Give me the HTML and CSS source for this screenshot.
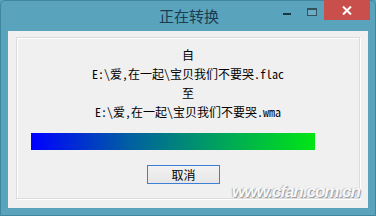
FILE: index.html
```html
<!DOCTYPE html>
<html lang="zh">
<head>
<meta charset="utf-8">
<title>正在转换</title>
<link rel="stylesheet" href="styles.css">
</head>
<body>
<div class="window">
  <div class="titlebar">
    <div class="spacer"></div>
    <div class="title">正在转换</div>
    <div class="controls">
      <div class="btn-min"><span class="dash"></span></div>
      <div class="btn-max"><span class="box"></span></div>
      <div class="btn-close">
        <svg width="10" height="9" viewBox="0 0 10 9"><path d="M1 0.5 L9 8.5 M9 0.5 L1 8.5" stroke="#fff" stroke-width="2"/></svg>
      </div>
    </div>
  </div>
  <div class="client">
    <div class="group">
      <div class="lines">
        <div class="line">自</div>
        <div class="line">E:\爱,在一起\宝贝我们不要哭.flac</div>
        <div class="line">至</div>
        <div class="line">E:\爱,在一起\宝贝我们不要哭.wma</div>
      </div>
      <div class="progress"></div>
      <div class="actions"><button class="cancel">取消</button></div>
    </div>
    <div class="watermark">www.cfan.com.cn</div>
  </div>
</div>
</body>
</html>
```
FILE: styles.css
```css
html, body {
  margin: 0;
  padding: 0;
  background: #5aa2bc;
}
.window {
  box-sizing: border-box;
  width: 376px;
  height: 216px;
  background: #5aa3bd;
  border: 1px solid #3f879f;
  border-radius: 5px 5px 0 0;
  display: flex;
  flex-direction: column;
}
.titlebar {
  height: 30px;
  display: grid;
  grid-template-columns: 1fr auto 1fr;
  align-items: start;
}
.title {
  font-family: "Noto Sans CJK SC", sans-serif;
  font-size: 15px;
  line-height: 30px;
  color: #1b3c4e;
  padding-left: 2px;
}
.controls {
  display: flex;
  justify-content: flex-end;
  padding-right: 5px;
}
.btn-min {
  width: 26px;
  height: 20px;
  display: flex;
  justify-content: center;
}
.dash {
  width: 8px;
  height: 2px;
  background: #1b3646;
  margin-top: 12px;
}
.btn-max {
  width: 24px;
  height: 20px;
  display: flex;
  justify-content: center;
}
.box {
  box-sizing: border-box;
  width: 10px;
  height: 8px;
  margin-top: 7px;
  border: 1px solid #33525e;
  border-top-width: 2px;
  background: #6aaec5;
}
.btn-close {
  width: 46px;
  height: 20px;
  margin-top: -1px;
  background: #c84f4b;
  display: flex;
  align-items: center;
  justify-content: center;
}
.client {
  position: relative;
  overflow: hidden;
  margin: 0 7px;
  height: 177px;
  background: #f0f0f0;
  padding: 6px 8px 9px;
  box-sizing: border-box;
}
.group {
  box-sizing: border-box;
  height: 162px;
  border: 1px solid #dcdcdc;
  box-shadow: inset 1px 1px 0 #ffffff, 1px 1px 0 #ffffff;
  padding-top: 7px;
}
.lines {
  text-align: center;
  font-family: "Noto Sans Mono CJK SC", "Noto Sans CJK SC", monospace;
  font-size: 12px;
  line-height: 19px;
  color: #000;
}
.progress {
  margin: 12px 0 0 14px;
  width: 284px;
  height: 17px;
  background: linear-gradient(to right, #0000ff 0%, #0060a0 35%, #00a060 65%, #00e614 100%);
}
.actions {
  margin-top: 15px;
  padding-left: 130px;
}
.cancel {
  box-sizing: border-box;
  width: 73px;
  height: 19px;
  padding: 0;
  border: 1px solid #3c7fd6;
  background: linear-gradient(#f2f2f2, #e6e6e6);
  font-family: "Noto Sans CJK SC", sans-serif;
  font-size: 12px;
  line-height: 17px;
  color: #000;
}
.watermark {
  position: absolute;
  left: 224px;
  top: 151px;
  white-space: nowrap;
  font-family: "Liberation Sans", sans-serif;
  font-weight: bold;
  font-style: italic;
  font-size: 17px;
  letter-spacing: -1px;
  color: #f8f8f8;
  text-shadow: 1px 1px 0 #a0a0a0, -1px 0 1px #b8b8b8;
}
```
